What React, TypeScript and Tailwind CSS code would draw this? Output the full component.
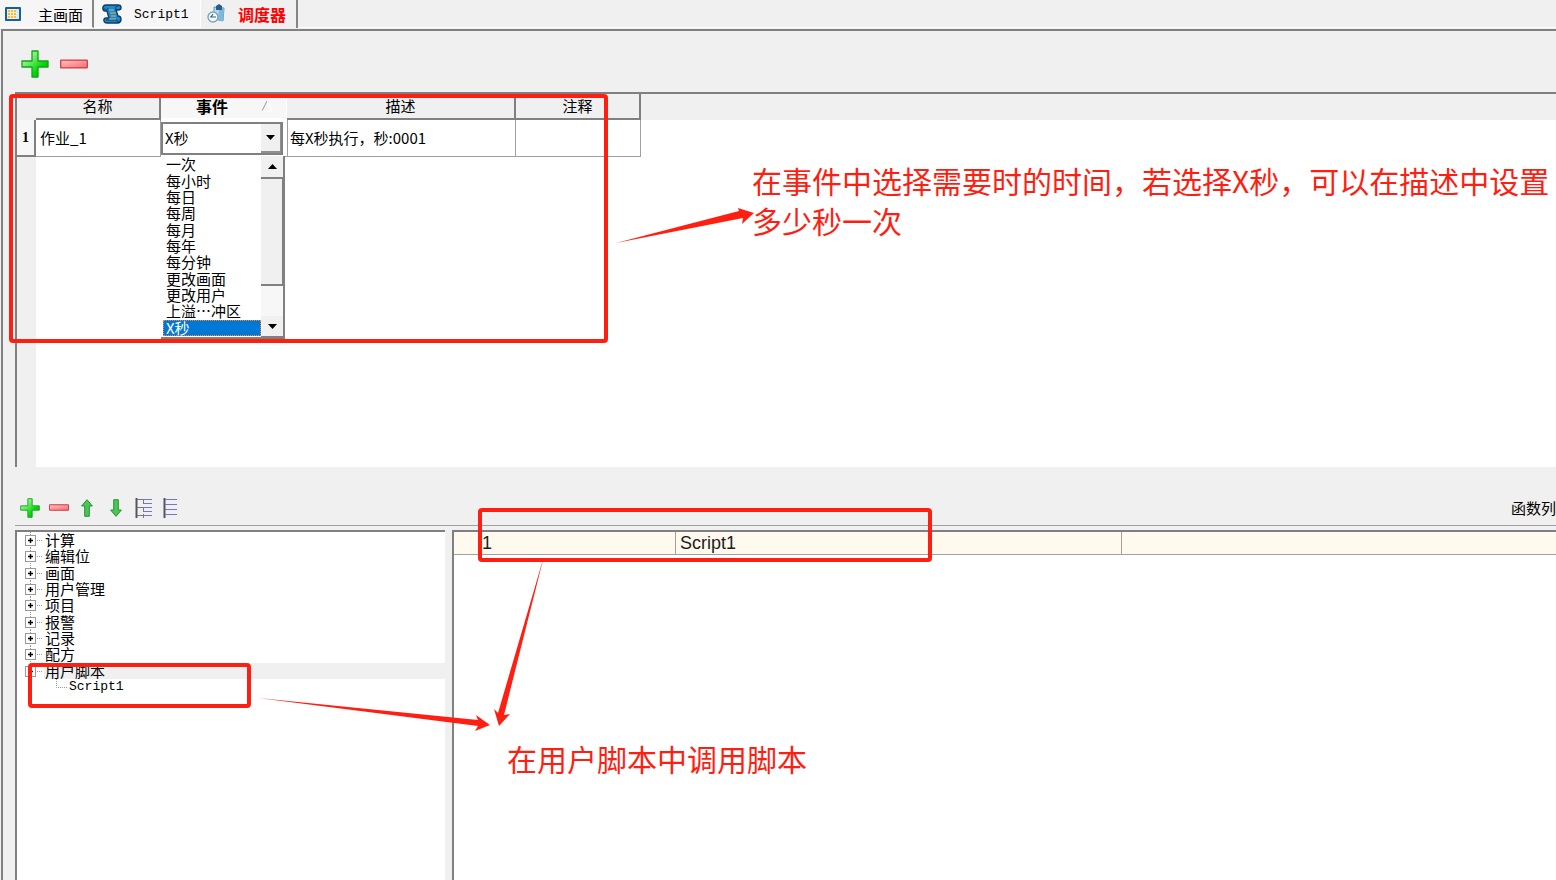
import { useState } from "react";
import type { ReactNode } from "react";

const events = ["一次", "每小时", "每日", "每周", "每月", "每年", "每分钟", "更改画面", "更改用户", "上溢…冲区", "X秒"];
const functions = ["计算", "编辑位", "画面", "用户管理", "项目", "报警", "记录", "配方"];

const ScreenIcon = () => (
  <svg width="18" height="16" viewBox="0 0 18 16">
    <rect x="1" y="1" width="16" height="14" rx="1" fill="#16609c" />
    <rect x="3" y="3" width="12" height="10" fill="#d9edf8" />
    <rect x="4" y="3" width="8" height="10" fill="#fff0c8" />
    <path d="M4 4h2v2H4zM7 4h2v2H7zM10 4h2v2h-2zM4 7h2v2H4zM7 7h2v2H7zM10 7h2v2h-2zM4 10h2v2H4zM7 10h2v2H7zM10 10h2v2h-2z" fill="#f7b84a" />
  </svg>
);

const ScriptIcon = () => (
  <svg width="20" height="20" viewBox="0 0 20 20">
    <path d="M4 1h12c4 0 4 5 0 5h-2l2 6c4 0 4 6 0 7H5c-4 0-4-5-1-5h3L5 7H3C0 7 0 1 4 1z" fill="#168ad8" stroke="#173b58" strokeWidth="1.4" />
    <path d="M2 4c0 2 3 3 4 0M15 6c-2-1-2-4 1-4M4 16h11c0 2 1 3 3 1" fill="none" stroke="#173b58" />
    <path d="M7 6h5M8 9h6M9 12h5M7 15h7" stroke="#d7b65a" strokeWidth="1.2" />
  </svg>
);

const SchedulerIcon = () => (
  <svg width="19" height="20" viewBox="0 0 19 20">
    <path d="M7 3l10 1-1 13-9-2z" fill="#b5d8ec" stroke="#5d9abf" />
    <path d="M12 5l5-1-1 13-5-1z" fill="#7fb9dc" />
    <path d="M9 2l3-2 3 2v4H9z" fill="#285e83" />
    <circle cx="6" cy="13" r="5" fill="#f5fafc" stroke="#7aa3bd" strokeWidth="1.4" />
    <path d="M3 13h6M6 10l-2 3" stroke="#315f7e" strokeWidth="1.2" />
  </svg>
);

const PlusIcon = ({ size }: { size: number }) => (
  <svg width={size} height={size} viewBox="0 0 28 28">
    <defs>
      <linearGradient id="plus" x1="0" y1="0" x2="1" y2="1">
        <stop offset="0.2" stopColor="#a8f59a" />
        <stop offset="0.65" stopColor="#08d80b" />
        <stop offset="1" stopColor="#05a50a" />
      </linearGradient>
    </defs>
    <path d="M11 1h6v10h10v6H17v10h-6V17H1v-6h10z" fill="url(#plus)" stroke="#12a31a" strokeWidth="1.3" strokeLinejoin="round" />
  </svg>
);

const MinusIcon = ({ width, height }: { width: number; height: number }) => (
  <svg width={width} height={height} viewBox="0 0 28 9" preserveAspectRatio="none">
    <defs>
      <linearGradient id="minus" x1="0" y1="0" x2="1" y2="1">
        <stop offset="0" stopColor="#ffc2c2" />
        <stop offset="1" stopColor="#f46c72" />
      </linearGradient>
    </defs>
    <rect x="0.7" y="1" width="26.6" height="7" rx="0.5" fill="url(#minus)" stroke="#cf3d43" strokeWidth="1.3" />
  </svg>
);

const ArrowIcon = ({ down = false }: { down?: boolean }) => (
  <svg width="12" height="18" viewBox="0 0 12 18" className={down ? "rotate-180" : ""}>
    <path d="M6 0.7L11.4 7H8.3v10.3H3.7V7H0.6z" fill="#4cc653" stroke="#24923a" strokeLinejoin="round" />
  </svg>
);

const ExpandIcon = () => (
  <svg width="18" height="20" viewBox="0 0 18 20">
    <path d="M1.5 0v20" stroke="#55555f" strokeWidth="2" />
    <path d="M2 1.5h6M2 9.5h6M2 17.5h6M8.5 2v4M8.5 10v4M8.5 16v4" stroke="#77777d" fill="none" />
    <path d="M8 1.5h9M9 5.5h8M8 9.5h9M9 13.5h8M8 17.5h9" stroke="#7474d8" />
  </svg>
);

const CollapseIcon = () => (
  <svg width="14" height="20" viewBox="0 0 14 20">
    <path d="M1.5 0v20" stroke="#55555f" strokeWidth="2" />
    <path d="M2 1.5h12M2 6.5h12M2 11.5h12M2 16.5h12" stroke="#7474d8" />
  </svg>
);

const Triangle = ({ up = false }: { up?: boolean }) => (
  <svg width="9" height="5" viewBox="0 0 9 5" className={up ? "rotate-180" : ""}>
    <path d="M0 0h9L4.5 5z" fill="#000" />
  </svg>
);

const IconButton = ({ label, children }: { label: string; children: ReactNode }) => (
  <button type="button" aria-label={label} className="flex items-center justify-center">
    {children}
  </button>
);

const TreeBox = ({ open = false }: { open?: boolean }) => (
  <svg width="20" height="16" viewBox="0 0 20 16" className="shrink-0">
    <path d="M6.5 0v3M6.5 13v3" stroke="#999" strokeDasharray="1 1" />
    <path d="M13 8.5h6" stroke="#999" strokeDasharray="1 1" />
    <rect x="1.5" y="3.5" width="10" height="10" fill="#fff" stroke="#999" />
    <path d={open ? "M4 8.5h5" : "M4 8.5h5M6.5 6v5"} stroke="#000" strokeWidth="1.4" />
  </svg>
);

const Tabs = () => (
  <nav className="flex h-7 items-stretch text-[15px] leading-7">
    <button type="button" className="flex w-[94px] items-center border-r-2 border-b border-[#858585] border-b-white bg-[#f6f6f6] pl-1">
      <ScreenIcon />
      <span className="ml-4 pt-0.5">主画面</span>
    </button>
    <button type="button" className="flex w-[107px] items-center border-r border-b border-white bg-[#f6f6f6] pl-2">
      <ScriptIcon />
      <span className="ml-3 pt-0.5 font-['Liberation_Mono',monospace] text-[13px]">Script1</span>
    </button>
    <button type="button" className="flex w-[97px] items-center border-r-2 border-[#858585] pl-1.5 font-bold text-[#ff0000]">
      <SchedulerIcon />
      <span className="ml-3 text-[16px]">调度器</span>
    </button>
    <div className="flex-1 border-b border-white" />
  </nav>
);

const EventList = ({ value, onPick }: { value: string; onPick: (v: string) => void }) => (
  <div className="absolute top-[36px] left-0 z-10 flex h-[183px] w-[124px] border-r-2 border-b-2 border-[#808080] bg-white">
    <ul role="listbox" aria-label="事件" className="flex h-[180px] min-w-0 flex-1 flex-col pl-0.5">
      {events.map((e) => (
        <li
          key={e}
          role="option"
          aria-selected={e === value}
          onClick={() => onPick(e)}
          className={
            e === value
              ? "flex flex-1 items-center bg-[#0078d7] pl-[3px] leading-4 text-white outline-1 -outline-offset-1 outline-dotted outline-[#ff8728]"
              : "flex flex-1 items-center pl-[3px] leading-4 whitespace-nowrap"
          }
        >
          {e}
        </li>
      ))}
    </ul>
    <div className="flex w-[22px] shrink-0 flex-col bg-[#f7f7f7]">
      <div className="flex h-[23px] shrink-0 items-center justify-center border-b-2 border-[#808080] bg-[#f0f0f0]"><Triangle up /></div>
      <div className="h-[107px] shrink-0 border-r border-b-2 border-[#808080] bg-[#f0f0f0]" />
      <div className="flex-1" />
      <div className="flex h-[21px] shrink-0 items-center justify-center border-b border-[#808080] bg-[#f0f0f0]"><Triangle /></div>
    </div>
  </div>
);

const JobTable = () => {
  const [event, setEvent] = useState("X秒");
  const head = "h-[26px] border-r-2 border-b-2 border-[#808080] bg-[#f0f0f0] p-0 font-normal leading-5";

  return (
    <div className="ml-[15px] flex h-[375px] flex-col border-t-2 border-l-2 border-[#808080] bg-white">
      <table className="w-full table-fixed border-separate border-spacing-0">
        <thead>
          <tr>
            <th className="w-[19px] bg-[#f0f0f0] p-0" />
            <th className={`${head} w-[125px]`}>名称</th>
            <th className="h-[26px] w-[126px] border-r border-b-2 border-white bg-[#f7f7f7] p-0 leading-5">
              <div className="flex items-center justify-end gap-8 pr-3">
                <span className="text-[16px]">事件</span>
                <svg width="14" height="11" viewBox="0 0 14 11">
                  <path d="M2 10L7 0" stroke="#999" />
                  <path d="M7 0l5 10H2" stroke="#fff" fill="none" />
                </svg>
              </div>
            </th>
            <th className={`${head} w-[229px]`}>描述</th>
            <th className={`${head} w-[125px]`}>注释</th>
            <th className="bg-[#f0f0f0] p-0" />
          </tr>
        </thead>
        <tbody>
          <tr>
            <th className="h-[37px] border-r-2 border-b-2 border-[#808080] bg-[#f7f7f7] p-0 font-['Liberation_Serif',serif] text-[14px]">1</th>
            <td className="border-r border-b border-[#a0a0a0] p-0 pl-1">作业_1</td>
            <td className="relative border-b border-[#a0a0a0] p-0">
              <div className="flex h-[33px] w-[122px] border-2 border-[#808080]">
                <select
                  aria-label="事件"
                  value={event}
                  onChange={(e) => setEvent(e.target.value)}
                  className="min-w-0 flex-1 appearance-none bg-white pl-0.5 leading-5 outline-none"
                >
                  {events.map((e) => (
                    <option key={e}>{e}</option>
                  ))}
                </select>
                <div className="flex w-5 items-center justify-center border-r border-b-2 border-[#909090] bg-[#f0f0f0]"><Triangle /></div>
              </div>
              <EventList value={event} onPick={setEvent} />
            </td>
            <td className="border-r border-b border-l border-[#a0a0a0] p-0 pl-0.5">每X秒执行，秒:0001</td>
            <td className="border-r border-b border-[#a0a0a0] p-0" />
            <td className="p-0" />
          </tr>
        </tbody>
      </table>
      <div className="w-[19px] flex-1 bg-[#f0f0f0]" />
    </div>
  );
};

const FunctionTree = () => (
  <div className="w-[430px] border-t-2 border-l-2 border-[#808080] bg-white">
    <ul className="flex h-[163px] flex-col leading-4">
      {functions.map((f) => (
        <li key={f} className="flex flex-1 items-center pl-[7px]">
          <TreeBox />
          <span className="pl-px">{f}</span>
        </li>
      ))}
      <li className="flex flex-1 items-center pl-[7px]">
        <TreeBox open />
        <span className="flex-1 bg-[#f0f0f0] pl-px">用户脚本</span>
      </li>
      <li className="flex flex-1 items-center pl-[38px]">
        <svg width="14" height="16" viewBox="0 0 14 16" className="shrink-0">
          <path d="M1.5 0v8.5H13" fill="none" stroke="#999" strokeDasharray="1 1" />
        </svg>
        <span className="font-['Liberation_Mono',monospace] text-[13px]">Script1</span>
      </li>
    </ul>
  </div>
);

const CallTable = () => (
  <div className="flex-1 border-t-2 border-l-2 border-[#808080] bg-white">
    <table className="w-full table-fixed border-separate border-spacing-0 bg-[#fff9ee] font-['Liberation_Sans',sans-serif] text-[18px] leading-[22px] text-[#1c1c1c]">
      <tbody>
        <tr>
          <td className="w-[222px] border-r border-b border-[#a0a0a0] p-0 pl-7">1</td>
          <td className="w-[446px] border-r border-b border-[#a0a0a0] p-0 pl-1">Script1</td>
          <td className="border-b border-[#a0a0a0] p-0" />
        </tr>
      </tbody>
    </table>
  </div>
);

const Notes = () => (
  <div className="pointer-events-none absolute inset-0 z-20 text-[30px] leading-10 text-[#ff1f12]">
    <div className="absolute top-[94px] left-[9px] h-[249px] w-[599px] rounded-[4px] border-4 border-[#ff1f12]" />
    <div className="absolute top-[663px] left-[28px] h-[45px] w-[223px] rounded-[4px] border-4 border-[#ff1f12]" />
    <div className="absolute top-[508px] left-[478px] h-[54px] w-[454px] rounded-[4px] border-4 border-[#ff1f12]" />
    <svg className="absolute inset-0 h-full w-full" fill="#ff1f12">
      <path d="M616 243L739 211L738 208L754 213L742 224L743 218Z" />
      <path d="M544 556L498 713L494 709L499 726L510 714L504 715Z" />
      <path d="M258 698L478 720L476 715L490 725L475 731L478 726Z" />
    </svg>
    <p className="absolute top-[160px] left-[752px] whitespace-nowrap">
      在事件中选择需要时的时间，若选择X秒，可以在描述中设置
      <br />
      多少秒一次
    </p>
    <p className="absolute top-[738px] left-[507px] whitespace-nowrap">在用户脚本中调用脚本</p>
  </div>
);

export default function App() {
  return (
    <div className="relative flex min-h-screen flex-col overflow-hidden bg-[#f0f0f0] font-['Noto_Sans_CJK_SC',sans-serif] text-[15px] leading-5 text-black">
      <Tabs />
      <main className="mt-px ml-px flex flex-1 flex-col border-t-2 border-l-2 border-[#808080]">
        <div className="-ml-[3px] flex flex-1 flex-col">
          <div className="flex h-[61px] items-center gap-[11px] pt-1 pl-[21px]">
            <IconButton label="添加作业"><PlusIcon size={28} /></IconButton>
            <IconButton label="删除作业"><MinusIcon width={28} height={10} /></IconButton>
          </div>
          <JobTable />
          <div className="mt-[23px] ml-[15px] flex h-[36px] items-center border-b border-[#a0a0a0] pl-[5px]">
            <div className="flex flex-1 items-center">
              <div className="flex w-[29px]"><IconButton label="添加函数"><PlusIcon size={20} /></IconButton></div>
              <div className="flex w-8"><IconButton label="删除函数"><MinusIcon width={20} height={7} /></IconButton></div>
              <div className="flex w-[29px]"><IconButton label="上移"><ArrowIcon /></IconButton></div>
              <div className="flex w-[25px]"><IconButton label="下移"><ArrowIcon down /></IconButton></div>
              <div className="flex w-7"><IconButton label="展开"><ExpandIcon /></IconButton></div>
              <IconButton label="折叠"><CollapseIcon /></IconButton>
            </div>
            <span>函数列</span>
          </div>
          <div className="mt-1 ml-[15px] flex flex-1 gap-[7px]">
            <FunctionTree />
            <CallTable />
          </div>
        </div>
      </main>
      <Notes />
    </div>
  );
}
